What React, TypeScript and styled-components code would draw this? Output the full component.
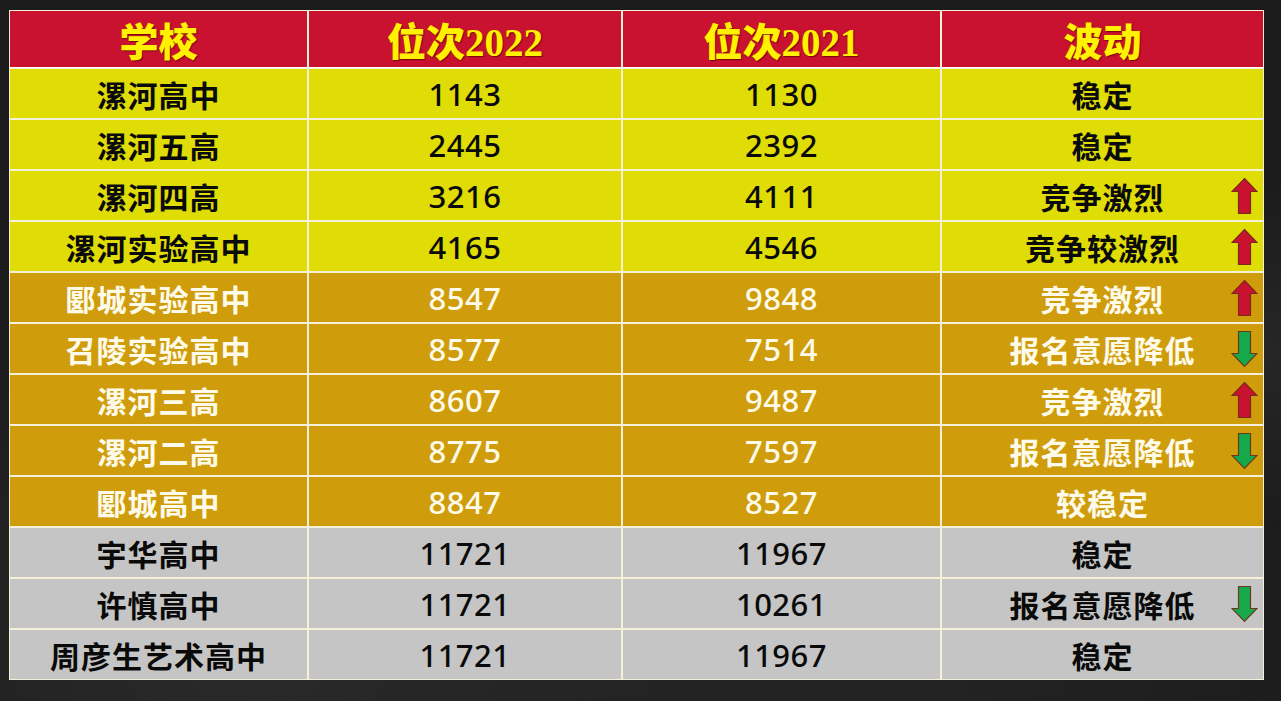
import React from "react";
import styled, { createGlobalStyle } from "styled-components";

const Global = createGlobalStyle`
  html, body { margin: 0; padding: 0; }
  body {
    width: 1281px;
    height: 701px;
    overflow: hidden;
    background:
      radial-gradient(ellipse at 20% 95%, rgba(70,70,70,0.35), transparent 40%),
      radial-gradient(ellipse at 95% 50%, rgba(60,60,60,0.35), transparent 35%),
      radial-gradient(ellipse at 70% 100%, rgba(55,55,55,0.3), transparent 40%),
      #1b1b1b;
    font-family: "Noto Sans CJK SC", "Noto Sans", sans-serif;
  }
`;

const Page = styled.div`
  padding: 10px 0 0 9px;
`;

const Table = styled.div`
  display: grid;
  grid-template-columns: 297px 312px 317px 321px;
  grid-template-rows: 56px repeat(12, 49px);
  gap: 2px;
  padding: 1px;
  width: max-content;
  background: #f4f1d8;
`;

type Tone = "yellow" | "gold" | "gray";

const toneBg: Record<Tone, string> = {
  yellow: "#dfdc06",
  gold: "#cf9d0c",
  gray: "#c5c5c5",
};

const HeadCell = styled.div`
  background: #c8122f;
  color: #fff200;
  display: flex;
  align-items: center;
  justify-content: center;
  font-family: "Liberation Serif", "Noto Sans CJK SC", serif;
  font-weight: 900;
  font-size: 39px;
  text-shadow: 1px 1px 1px rgba(90, 0, 0, 0.7);
  border-bottom: 1px solid #fff;
  margin-bottom: -1px;
`;

const Cell = styled.div<{ $tone: Tone }>`
  position: relative;
  background: ${(p) => toneBg[p.$tone]};
  color: ${(p) => (p.$tone === "gold" ? "#fffbea" : "#0a0a0a")};
  display: flex;
  align-items: center;
  justify-content: center;
  font-family: "Noto Sans CJK SC", sans-serif;
  font-weight: 700;
  font-size: 30px;
  letter-spacing: 1px;
  line-height: 1;
  padding-top: 1px;
`;

const Num = styled.span`
  font-family: "Noto Sans", "Noto Sans CJK SC", sans-serif;
  font-weight: 500;
  font-size: 31px;
  letter-spacing: 0.5px;
`;

const ArrowBox = styled.span`
  position: absolute;
  right: 5px;
  top: 50%;
  transform: translateY(-50%);
  width: 27px;
  height: 37px;
  display: flex;
`;

const UpArrow = () => (
  <ArrowBox>
    <svg width="27" height="37" viewBox="0 0 27 37">
      <polygon
        points="13.5,1 26,14 19.5,14 19.5,36 7.5,36 7.5,14 1,14"
        fill="#c8122f"
        stroke="#7a2a1a"
        strokeWidth="1.2"
        strokeLinejoin="miter"
      />
    </svg>
  </ArrowBox>
);

const DownArrow = () => (
  <ArrowBox>
    <svg width="27" height="37" viewBox="0 0 27 37">
      <polygon
        points="7.5,1 19.5,1 19.5,23 26,23 13.5,36 1,23 7.5,23"
        fill="#16a94c"
        stroke="#6a3a1e"
        strokeWidth="1.2"
        strokeLinejoin="miter"
      />
    </svg>
  </ArrowBox>
);

type Row = {
  school: string;
  y22: string;
  y21: string;
  trend: string;
  arrow?: "up" | "down";
  tone: Tone;
};

const rows: Row[] = [
  { school: "漯河高中", y22: "1143", y21: "1130", trend: "稳定", tone: "yellow" },
  { school: "漯河五高", y22: "2445", y21: "2392", trend: "稳定", tone: "yellow" },
  { school: "漯河四高", y22: "3216", y21: "4111", trend: "竞争激烈", arrow: "up", tone: "yellow" },
  { school: "漯河实验高中", y22: "4165", y21: "4546", trend: "竞争较激烈", arrow: "up", tone: "yellow" },
  { school: "郾城实验高中", y22: "8547", y21: "9848", trend: "竞争激烈", arrow: "up", tone: "gold" },
  { school: "召陵实验高中", y22: "8577", y21: "7514", trend: "报名意愿降低", arrow: "down", tone: "gold" },
  { school: "漯河三高", y22: "8607", y21: "9487", trend: "竞争激烈", arrow: "up", tone: "gold" },
  { school: "漯河二高", y22: "8775", y21: "7597", trend: "报名意愿降低", arrow: "down", tone: "gold" },
  { school: "郾城高中", y22: "8847", y21: "8527", trend: "较稳定", tone: "gold" },
  { school: "宇华高中", y22: "11721", y21: "11967", trend: "稳定", tone: "gray" },
  { school: "许慎高中", y22: "11721", y21: "10261", trend: "报名意愿降低", arrow: "down", tone: "gray" },
  { school: "周彦生艺术高中", y22: "11721", y21: "11967", trend: "稳定", tone: "gray" },
];

export default function App() {
  return (
    <>
      <Global />
      <Page>
        <Table>
          <HeadCell>学校</HeadCell>
          <HeadCell>位次2022</HeadCell>
          <HeadCell>位次2021</HeadCell>
          <HeadCell>波动</HeadCell>
          {rows.map((r, i) => (
            <React.Fragment key={i}>
              <Cell $tone={r.tone}>{r.school}</Cell>
              <Cell $tone={r.tone}>
                <Num>{r.y22}</Num>
              </Cell>
              <Cell $tone={r.tone}>
                <Num>{r.y21}</Num>
              </Cell>
              <Cell $tone={r.tone}>
                {r.trend}
                {r.arrow === "up" && <UpArrow />}
                {r.arrow === "down" && <DownArrow />}
              </Cell>
            </React.Fragment>
          ))}
        </Table>
      </Page>
    </>
  );
}
